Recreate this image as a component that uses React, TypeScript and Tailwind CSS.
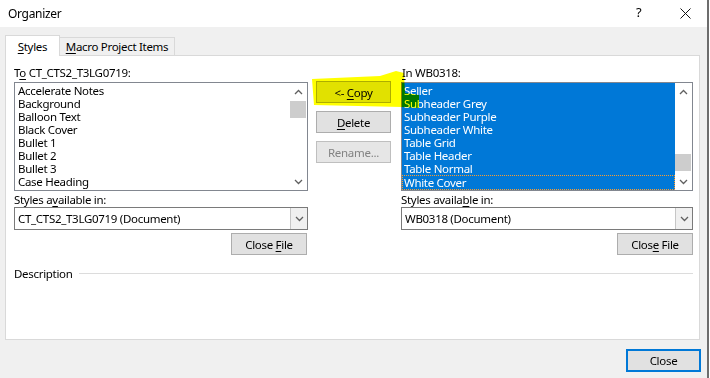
import type { ReactNode } from 'react';

const leftItems = ['Accelerate Notes', 'Background', 'Balloon Text', 'Black Cover', 'Bullet 1', 'Bullet 2', 'Bullet 3', 'Case Heading'];
const rightItems = ['Seller', 'Subheader Grey', 'Subheader Purple', 'Subheader White', 'Table Grid', 'Table Header', 'Table Normal', 'White Cover'];

function U({ children }: { children: ReactNode }) {
  return <span className="underline underline-offset-2">{children}</span>;
}

function Btn({ children, w = 'w-[75px]', disabled = false }: { children: ReactNode; w?: string; disabled?: boolean }) {
  return (
    <div
      className={`${w} h-[22px] flex items-center justify-center border ${
        disabled ? 'text-[#838383] border-[#bfbfbf] bg-[#e6e6e6]' : 'text-black border-[#adadad] bg-[#e1e1e1]'
      }`}
    >
      <span>{children}</span>
    </div>
  );
}

function Chevron({ up }: { up?: boolean }) {
  return (
    <svg width="9" height="6" viewBox="0 0 9 6">
      <path d={up ? 'M1 5 L4.5 1.5 L8 5' : 'M1 1 L4.5 4.5 L8 1'} fill="none" stroke="#606060" strokeWidth="1.3" />
    </svg>
  );
}

function Scrollbar({ thumbTop }: { thumbTop: number }) {
  return (
    <div className="w-[17px] h-full flex flex-col items-center bg-white relative">
      <div className="h-[17px] flex items-center justify-center"><Chevron up /></div>
      <div className="flex-1 w-full relative">
        <div className="absolute left-0 right-[1px] h-[17px] bg-[#cdcdcd]" style={{ top: thumbTop }} />
      </div>
      <div className="h-[17px] flex items-center justify-center"><Chevron /></div>
    </div>
  );
}

function Combo({ text, w }: { text: string; w: string }) {
  return (
    <div className={`${w} h-[23px] border border-[#7a7a7a] bg-white flex`}>
      <div className="flex-1 pl-[3px] flex items-center">{text}</div>
      <div className="w-[17px] border-l border-[#c6c6c6] bg-[#f0f0f0] flex items-center justify-center">
        <Chevron />
      </div>
    </div>
  );
}

export default function App() {
  return (
    <div
      className="w-[710px] h-[378px] flex bg-white overflow-hidden text-[11.5px] leading-[13px] tracking-[-0.3px] text-black"
      style={{ fontFamily: '"Noto Sans", Arial, sans-serif' }}
    >
      <div className="w-[707px] h-full bg-[#f0f0f0] flex flex-col relative">
        {/* title bar */}
        <div className="h-[27px] bg-white flex items-center pl-[8px] relative">
          <span className="text-[12px]">Organizer</span>
          <span className="absolute left-[636px] top-[6px] text-[13px]">?</span>
          <svg className="absolute left-[680px] top-[8px]" width="11" height="11" viewBox="0 0 11 11">
            <path d="M0.5 0.5 L10.5 10.5 M10.5 0.5 L0.5 10.5" stroke="#111" strokeWidth="1" />
          </svg>
        </div>

        {/* tabs */}
        <div className="pl-[5px] mt-[8px] flex items-end h-[20px] relative z-10">
          <div className="w-[55px] h-[21px] -mb-[1px] bg-white border border-b-0 border-[#d9d9d9] flex items-center justify-center">
            <span><U>S</U>tyles</span>
          </div>
          <div className="w-[115px] h-[18px] bg-[#f0f0f0] border border-l-0 border-b-0 border-[#d9d9d9] flex items-center justify-center">
            <span><U>M</U>acro Project Items</span>
          </div>
        </div>

        {/* panel */}
        <div className="ml-[5px] w-[695px] h-[285px] bg-white border border-[#d9d9d9] pt-[10px] pl-[8px] flex flex-col">
          <div className="flex">
            {/* left */}
            <div className="w-[294px] flex flex-col">
              <div className="h-[13px] mb-[3px]">T<U>o</U> CT_CTS2_T3LG0719:</div>
              <div className="h-[109px] border border-[#828790] flex">
                <div className="flex-1 pt-[1px] pl-[3px]">
                  {leftItems.map(t => (
                    <div key={t} className="h-[13px]">{t}</div>
                  ))}
                </div>
                <Scrollbar thumbTop={1} />
              </div>
              <div className="mt-[2px] h-[13px]">Styles a<U>v</U>ailable in:</div>
              <div className="mt-[1px]"><Combo text="CT_CTS2_T3LG0719 (Document)" w="w-[294px]" /></div>
              <div className="mt-[3px] flex justify-end pr-[1px]">
                <Btn w="w-[76px]">Close <U>F</U>ile</Btn>
              </div>
            </div>

            {/* middle */}
            <div className="ml-[8px] w-[75px] pt-[15px] flex flex-col gap-[8px]">
              <Btn>&lt;- <U>C</U>opy</Btn>
              <Btn><U>D</U>elete</Btn>
              <Btn disabled>Rename...</Btn>
            </div>

            {/* right */}
            <div className="ml-[10px] w-[292px] flex flex-col">
              <div className="h-[13px] mb-[3px] pl-[1px]"><U>I</U>n WB0318:</div>
              <div className="h-[109px] border border-[#828790] flex">
                <div className="flex-1 bg-[#0078d7] text-white pt-[1px]">
                  {rightItems.map((t, i) => (
                    <div
                      key={t}
                      className={
                        i === rightItems.length - 1
                          ? 'h-[15px] border border-dotted border-[#ff9c2a] pl-[1px] leading-[13px]'
                          : 'h-[13px] pl-[2px]'
                      }
                    >
                      {t}
                    </div>
                  ))}
                </div>
                <Scrollbar thumbTop={54} />
              </div>
              <div className="mt-[2px] h-[13px]">Styles availa<U>b</U>le in:</div>
              <div className="mt-[1px]"><Combo text="WB0318 (Document)" w="w-[292px]" /></div>
              <div className="mt-[3px] flex justify-end">
                <Btn w="w-[76px]">Clos<U>e</U> File</Btn>
              </div>
            </div>
          </div>

          {/* description */}
          <div className="mt-[12px] flex items-center pr-[6px]">
            <span>Description</span>
            <div className="flex-1 ml-[6px] h-[1px] bg-[#dcdcdc]" />
          </div>
        </div>

        {/* bottom */}
        <div className="flex justify-end pr-[6px] mt-[9px]">
          <div className="w-[75px] h-[23px] border-2 border-[#0078d7] bg-[#e1e1e1] flex items-center justify-center">Close</div>
        </div>

        {/* highlighter annotation */}
        <svg className="absolute left-0 top-0 pointer-events-none mix-blend-multiply" width="707" height="378">
          <polygon points="312,79 380,76 396,71 404,73 405,93 419,95 419,108 402,107 314,105" fill="#ffff00" />
        </svg>
      </div>
      <div className="w-[2px] h-full bg-[#6d6d6d]" />
      <div className="flex-1 bg-white" />
    </div>
  );
}
